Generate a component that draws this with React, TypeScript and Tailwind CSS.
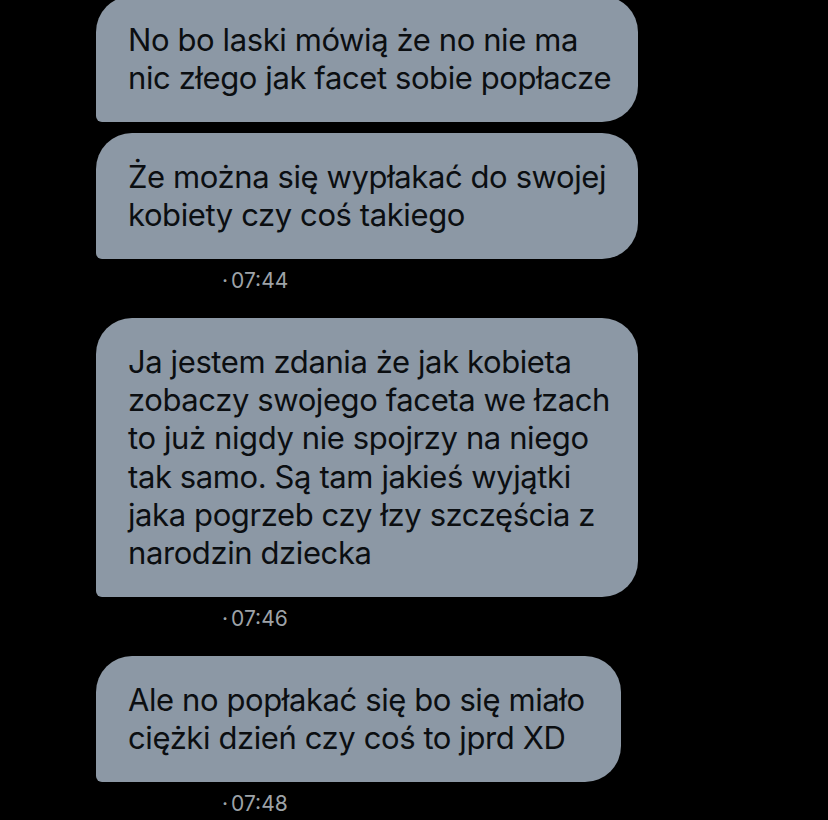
const messages = [
  {
    lines: ['No bo laski mówią że no nie ma', 'nic złego jak facet sobie popłacze'],
    width: 'w-[542px]',
    time: null,
  },
  {
    lines: ['Że można się wypłakać do swojej', 'kobiety czy coś takiego'],
    width: 'w-[542px]',
    time: '07:44',
  },
  {
    lines: [
      'Ja jestem zdania że jak kobieta',
      'zobaczy swojego faceta we łzach',
      'to już nigdy nie spojrzy na niego',
      'tak samo. Są tam jakieś wyjątki',
      'jaka pogrzeb czy łzy szczęścia z',
      'narodzin dziecka',
    ],
    width: 'w-[542px]',
    time: '07:46',
  },
  {
    lines: ['Ale no popłakać się bo się miało', 'ciężki dzień czy coś to jprd XD'],
    width: 'w-[525px]',
    time: '07:48',
  },
];

const Bubble = ({ lines, width }: { lines: string[]; width: string }) => (
  <div
    className={`${width} rounded-[36px] rounded-bl-[6px] bg-[#8c98a5] px-8 py-[24.75px] text-[31px] leading-[38.25px] tracking-[-0.4px] text-[#0b0e11]`}
  >
    {lines.map((line) => (
      <div key={line} className="whitespace-nowrap">
        {line}
      </div>
    ))}
  </div>
);

const App = () => {
  return (
    <div
      className="w-[828px] h-[820px] overflow-hidden bg-black pl-24"
      style={{ fontFamily: 'Inter, "Noto Sans", sans-serif' }}
    >
      <div className="flex flex-col -mt-1">
        {messages.map((msg, i) => (
          <div key={i} className={i === 0 ? '' : i === 1 ? 'mt-[11px]' : 'mt-[25px]'}>
            <Bubble lines={msg.lines} width={msg.width} />
            {msg.time && (
              <div className="mt-[10px] flex items-center pl-[126px] text-[21px] leading-6 text-[#9ea3a8]">
                <span className="mr-[3px]">·</span>
                <span>{msg.time}</span>
              </div>
            )}
          </div>
        ))}
      </div>
    </div>
  );
};

export default App;
